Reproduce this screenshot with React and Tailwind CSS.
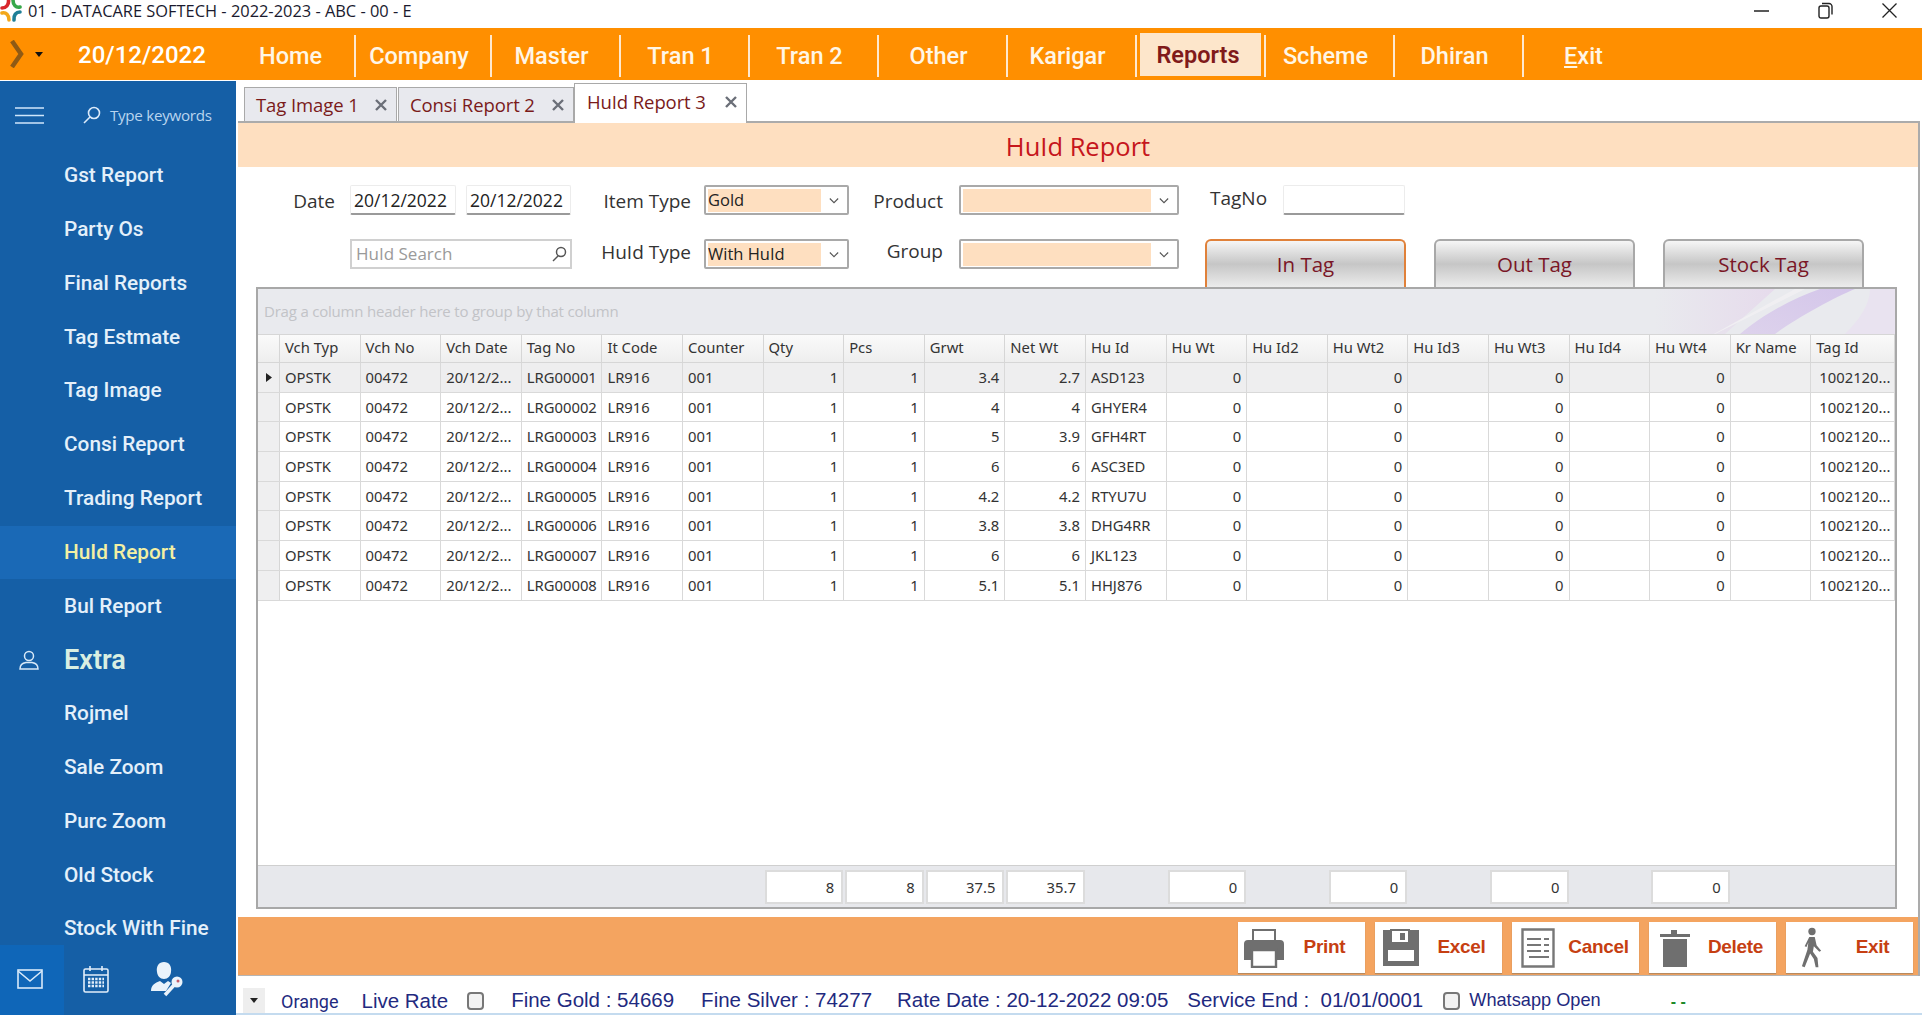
import React from "react";

const menu = ["Home","Company","Master","Tran 1","Tran 2","Other","Karigar","Reports","Scheme","Dhiran"];
const side = ["Gst Report","Party Os","Final Reports","Tag Estmate","Tag Image","Consi Report","Trading Report","HuId Report","Bul Report"];
const side2 = ["Rojmel","Sale Zoom","Purc Zoom","Old Stock","Stock With Fine"];
const cols = ["Vch Typ","Vch No","Vch Date","Tag No","It Code","Counter","Qty","Pcs","Grwt","Net Wt","Hu Id","Hu Wt","Hu Id2","Hu Wt2","Hu Id3","Hu Wt3","Hu Id4","Hu Wt4","Kr Name","Tag Id"];
const numeric = new Set([6,7,8,9,11,13,15,17]);
const data = [
  ["LRG00001","3.4","2.7","ASD123"],
  ["LRG00002","4","4","GHYER4"],
  ["LRG00003","5","3.9","GFH4RT"],
  ["LRG00004","6","6","ASC3ED"],
  ["LRG00005","4.2","4.2","RTYU7U"],
  ["LRG00006","3.8","3.8","DHG4RR"],
  ["LRG00007","6","6","JKL123"],
  ["LRG00008","5.1","5.1","HHJ876"],
];
const rows = data.map(([tag,g,n,h]) => ["OPSTK","00472","20/12/2...",tag,"LR916","001","1","1",g,n,h,"0","","0","","0","","0","","1002120..."]);
const totals = {6:"8",7:"8",8:"37.5",9:"35.7",11:"0",13:"0",15:"0",17:"0"};
const gridCols = "grid grid-cols-[22px_repeat(19,80.6px)_minmax(0,1fr)]";

const Chevron = () => (
  <svg viewBox="0 0 16 12" className="w-[14px] h-[10px] text-[#555]" fill="none" stroke="currentColor" strokeWidth="1.3"><path d="M3 3l5 5 5-5"/></svg>
);

function Combo({ value, inner }) {
  return (
    <div className={`flex items-center h-[30px] rounded-[2px] border-2 border-[#a9a9a9] bg-white pl-[2px] ${inner === "w" ? "w-[220px]" : "w-[145px]"}`}>
      <div className={`h-[23px] bg-[#fedfc0] text-[16.5px] leading-[21px] text-[#222] ${inner === "w" ? "w-[188px]" : "w-[113px]"}`}>{value}</div>
      <div className="flex-1 flex justify-center pt-[2px]"><Chevron /></div>
    </div>
  );
}

function Label({ w, children, className = "" }) {
  return <div className={`text-[19px] leading-[30px] text-right text-[#333] ${w} ${className}`}>{children}</div>;
}

function TagButton({ children, active, ml }) {
  return (
    <div className={`w-[201px] ${ml} h-[48px] rounded-t-[6px] border-2 border-b-0 ${active ? "border-[#e0813a]" : "border-[#a8a8a8]"} bg-gradient-to-b from-[#f6f6f6] via-[#c6c6c6] to-[#ececec] flex items-center justify-center text-[20.5px] text-[#7a1626] pt-[1px]`}>
      {children}
    </div>
  );
}

function Logo() {
  return (
    <svg viewBox="0 0 22 24" className="w-[22px] h-[24px] -mt-[1px]" fill="none" strokeWidth="3.6" strokeLinecap="round">
      <path d="M2 9C6 9 9 6 8.5 1" stroke="#d8262c" />
      <path d="M13 1C13 6 16 9 20 8" stroke="#37a84a" />
      <path d="M20 13C16 13 13.5 16 14 21" stroke="#1f7f96" />
      <path d="M9 21C9 16 6 13 2 14" stroke="#f2a71b" />
    </svg>
  );
}

const PrintIcon = () => (
  <svg viewBox="0 0 42 40" className="w-[42px] h-[40px]">
    <path d="M10 14V2h22v12" fill="none" stroke="#6f6f6f" strokeWidth="2"/>
    <path d="M5 12h32a4 4 0 0 1 4 4v16h-8v-8H9v8H1V16a4 4 0 0 1 4-4z" fill="#6f6f6f"/>
    <path d="M9 22h24v17H9z" fill="#fff" stroke="#6f6f6f" strokeWidth="2.4"/>
  </svg>
);
const SaveIcon = () => (
  <svg viewBox="0 0 36 38" className="w-[36px] h-[38px]">
    <path d="M0 1h7v13h20V1h9v36H0z" fill="#6f6f6f"/>
    <path d="M8 1h18v13H8z" fill="none" stroke="#6f6f6f" strokeWidth="2"/>
    <path d="M17 4h5v7h-5z" fill="#6f6f6f"/>
    <path d="M5 21h26v11H5z" fill="#fff"/>
  </svg>
);
const DocIcon = () => (
  <svg viewBox="0 0 34 40" className="w-[34px] h-[40px]" fill="none" stroke="#777" >
    <path d="M1.5 1.5h31v37h-31z" strokeWidth="2.4"/>
    <path d="M6 11h14M23 11h5M6 17h14M23 17h5M6 23h14M23 23h5M8 29h20" strokeWidth="2.2"/>
  </svg>
);
const TrashIcon = () => (
  <svg viewBox="0 0 30 38" className="w-[30px] h-[38px]">
    <path d="M0 5h11V1h6v4h13v3H0z" fill="#6f6f6f"/>
    <path d="M3 10h24v28H3z" fill="#6f6f6f"/>
  </svg>
);
const WalkIcon = () => (
  <svg viewBox="0 0 24 44" className="w-[22px] h-[42px]">
    <circle cx="12" cy="4" r="4" fill="#6f6f6f"/>
    <path d="M9 10h6l2 9 5 6-2 1-6-6-1 6 5 7 1 10h-3l-2-9-4-6-6 15-3-1 6-18 1-8-2 5-2-1z" fill="#6f6f6f"/>
  </svg>
);

function ActionBtn({ icon, label }) {
  return (
    <div className="w-[127px] h-[51px] bg-white flex items-center pr-[6px] shadow-[0_1px_1px_#b98a5e]">
      <div className="w-[52px] flex justify-center">{icon}</div>
      <div className="flex-1 text-center text-[19px] font-bold text-[#c63f12] font-['Liberation_Sans',sans-serif] tracking-[-0.3px]">{label}</div>
    </div>
  );
}

export default function App() {
  return (
    <div className="w-[1922px] h-[1015px] overflow-hidden bg-white flex flex-col font-['Open_Sans',sans-serif] text-[#222]">
      {/* title bar */}
      <div className="h-[28px] flex items-start shrink-0">
        <Logo />
        <div className="ml-[6px] text-[16.4px] text-[#1a1a2e] leading-[22px]">01 - DATACARE SOFTECH - 2022-2023 - ABC - 00 - E</div>
        <div className="ml-auto flex items-center pt-[2px] pr-[25px] gap-[49px]">
          <svg viewBox="0 0 15 15" className="w-[15px] h-[15px]"><path d="M0 8h15" stroke="#222" strokeWidth="1.5"/></svg>
          <svg viewBox="0 0 15 17" className="w-[15px] h-[17px]" fill="none" stroke="#222" strokeWidth="1.4"><rect x="1" y="4" width="10" height="12" rx="2"/><path d="M4 1.5h7a3 3 0 0 1 3 3v8"/></svg>
          <svg viewBox="0 0 15 15" className="w-[15px] h-[15px]" fill="none" stroke="#222" strokeWidth="1.3"><path d="M0.5 0.5l14 14M14.5 0.5l-14 14"/></svg>
        </div>
      </div>

      {/* orange menu */}
      <div className="h-[52px] shrink-0 bg-[#ff8f00] flex items-center font-['Roboto',sans-serif]">
        <svg viewBox="0 0 14 28" className="ml-[10px] w-[14px] h-[28px]"><path d="M2 1l9 13-9 13" fill="none" stroke="#8f5a14" strokeWidth="4.5"/></svg>
        <svg viewBox="0 0 8 5" className="ml-[11px] w-[8px] h-[5px]"><path d="M0 0h8L4 5z" fill="#111"/></svg>
        <div className="w-[149px] ml-[35px] pt-[2px] text-white text-[24px] font-medium leading-none whitespace-nowrap">20/12/2022</div>
        <div className="flex h-full items-center">
          {menu.map((m, i) => {
            const active = m === "Reports";
            return (
              <div key={m} className={`${i === 1 ? "w-[136px]" : "w-[129px]"} h-[42px] mt-[3px] flex items-center justify-center border-r-2 border-[#ffe9cf] text-[23.5px] font-medium ${active ? "pl-[2px] pr-[3px]" : i === 0 ? "" : "pr-[8px]"}`}>
                {active ? (
                  <div className="w-[121px] h-[43px] -mt-[3px] pr-[4px] pt-[4px] bg-[#fde6cb] text-[#801a1a] flex items-center justify-center font-semibold">{m}</div>
                ) : (
                  <span className="text-[#fff6e6] pt-[2px]">{m}</span>
                )}
              </div>
            );
          })}
          <div className="w-[129px] pr-[10px] pt-[5px] flex justify-center text-[23.5px] font-medium text-[#fff6e6]"><span><span className="underline">E</span>xit</span></div>
        </div>
      </div>

      <div className="flex-1 flex min-h-0 pt-[1px]">
        {/* sidebar */}
        <aside className="w-[236px] shrink-0 bg-[#155fa6] flex flex-col font-['Roboto',sans-serif]">
          <div className="h-[68px] shrink-0 flex items-center pl-[15px]">
            <svg viewBox="0 0 29 17" className="w-[29px] h-[17px]" stroke="#cfe6fb" strokeWidth="1.6"><path d="M0 1h29M0 8.5h29M0 16h29"/></svg>
            <svg viewBox="0 0 18 18" className="ml-[39px] w-[18px] h-[18px]" fill="none" stroke="#dbeafa" strokeWidth="1.6"><circle cx="11" cy="7" r="5.5"/><path d="M7 11l-6 6"/></svg>
            <div className="ml-[9px] text-[15.2px] text-[#b9d5ef] font-['Open_Sans',sans-serif] tracking-[-0.3px]">Type keywords</div>
          </div>
          <div className="flex-1 min-h-0">
            {side.map((s) => (
              <div key={s} className={`h-[53.8px] flex items-center pl-[64px] text-[20.8px] font-medium ${s === "HuId Report" ? "bg-[#1a69b6] text-[#f3f0a3]" : "text-[#e4f0fa]"}`}>{s}</div>
            ))}
            <div className="h-[53.8px] flex items-center">
              <svg viewBox="0 0 20 20" className="ml-[19px] w-[20px] h-[20px]" fill="none" stroke="#d8e9f8" strokeWidth="1.5"><circle cx="10" cy="6" r="4.5"/><path d="M1 19c0-4 2.5-6 6-6.5h6c3.5.5 6 2.5 6 6.5z"/></svg>
              <div className="ml-[25px] text-[27px] font-semibold text-[#d9efe2]">Extra</div>
            </div>
            {side2.map((s) => (
              <div key={s} className="h-[53.8px] flex items-center pl-[64px] text-[20.8px] font-medium text-[#e4f0fa]">{s}</div>
            ))}
          </div>
          <div className="h-[70px] shrink-0 flex bg-[#155fa6]">
            <div className="w-[64px] bg-[#0f66b8] flex items-center justify-center pr-[4px]">
              <svg viewBox="0 0 26 20" className="w-[26px] h-[20px] -mt-[2px]" fill="none" stroke="#d7e9f9" strokeWidth="1.6"><rect x="1" y="1" width="24" height="18"/><path d="M1 2l12 10L25 2"/></svg>
            </div>
            <div className="w-[64px] flex items-center justify-center">
              <svg viewBox="0 0 28 28" className="w-[28px] h-[28px] -mt-[2px]" fill="none" stroke="#e2eefa" strokeWidth="1.6">
                <rect x="2" y="4" width="24" height="23" rx="1.5"/>
                <path d="M2 10h24M8 1v5M20 1v5"/>
                <path d="M6 14h16M6 17.5h16M6 21h16" strokeWidth="2.4" strokeDasharray="2.4 1.2"/>
              </svg>
            </div>
            <div className="flex items-center">
              <svg viewBox="0 0 34 36" className="ml-[22px] w-[34px] h-[36px] -mt-[2px]">
                <path d="M14 1c5 0 8 4 7 10-.5 4-3 7-7 7s-6.5-3-7-7C6 5 9 1 14 1z" fill="#eaf3fb"/>
                <path d="M1 30c0-6 4-8 9-10l4 3 4-3 3 2-5 8H1z" fill="#eaf3fb"/>
                <path d="M15 34l10-11" stroke="#eaf3fb" strokeWidth="3.5" fill="none"/>
                <circle cx="27" cy="21" r="5.5" fill="#eaf3fb"/>
                <circle cx="28" cy="20" r="1.5" fill="#c65a6a"/>
              </svg>
            </div>
          </div>
        </aside>

        {/* content */}
        <main className="flex-1 min-w-0 flex flex-col pl-[2px] pr-[2px]">
          {/* tabs */}
          <div className="h-[40px] shrink-0 flex items-end pl-[6px] relative z-10">
            <div className="w-[153px] h-[34px] bg-[#e8e9ee] border border-b-0 border-[#a9a9a9] flex items-center pl-[11px] text-[18.5px] text-[#7a1a1a]">
              <span className="flex-1 tracking-[-0.1px]">Tag Image 1</span><X />
            </div>
            <div className="ml-[1px] w-[176px] h-[34px] bg-[#e8e9ee] border border-b-0 border-[#a9a9a9] flex items-center pl-[11px] text-[18.5px] text-[#7a1a1a]">
              <span className="flex-1 tracking-[-0.1px]">Consi Report 2</span><X />
            </div>
            <div className="w-[173px] h-[40px] -mb-[2px] bg-white border border-b-0 border-[#a9a9a9] flex items-center pl-[12px] text-[18.5px] text-[#7a1a1a] pb-[3px]">
              <span className="flex-1 tracking-[-0.1px]">HuId Report 3</span><X />
            </div>
          </div>

          <div className="flex-1 min-h-0 flex flex-col border-t-2 border-r-2 border-[#ababab]">
            <div className="h-[44px] shrink-0 pt-[2px] bg-[#fedfc0] flex items-center justify-center text-[25.5px] text-[#c6161c]">HuId Report</div>

            {/* form */}
            <div className="h-[120px] shrink-0 pt-[18px]">
              <div className="flex h-[30px] items-center">
                <Label w="w-[97px]" className="pt-[2px]">Date</Label>
                <DateBox w="w-[106px]" ml="ml-[15px]" />
                <DateBox w="w-[105px]" ml="ml-[10px]" />
                <Label w="w-[120px]" className="pt-[2px]">Item Type</Label>
                <div className="ml-[13px]"><Combo value="Gold" /></div>
                <Label w="w-[94px]" className="pt-[2px]">Product</Label>
                <div className="ml-[16px]"><Combo inner="w" /></div>
                <div className="ml-[31px] w-[57px] text-[19px] leading-[24px] -mt-[4px] text-[#333]">TagNo</div>
                <div className="ml-[16px] w-[122px] h-[30px] bg-white rounded-[2px] border border-[#ececec] border-b-2 border-b-[#9a9a9a]"></div>
              </div>
              <div className="flex items-start mt-[24px]">
                <div className="ml-[112px] w-[222px] h-[30px] border-2 border-[#d0d0d0] flex items-center pl-[4px] pr-[3px] text-[17px] text-[#9a9a9a]">
                  <span className="flex-1">HuId Search</span>
                  <svg viewBox="0 0 16 16" className="w-[16px] h-[16px]" fill="none" stroke="#555" strokeWidth="1.5"><circle cx="10" cy="6" r="4.5"/><path d="M7 10l-5 5"/></svg>
                </div>
                <Label w="w-[119px]" className="-mt-[2px]">HuId Type</Label>
                <div className="ml-[13px]"><Combo value="With HuId" /></div>
                <Label w="w-[94px]" className="-mt-[3px]">Group</Label>
                <div className="ml-[16px]"><Combo inner="w" /></div>
                <TagButton active ml="ml-[26px]">In Tag</TagButton>
                <TagButton ml="ml-[28px]">Out Tag</TagButton>
                <TagButton ml="ml-[28px]">Stock Tag</TagButton>
              </div>
            </div>

            {/* grid */}
            <div className="ml-[18px] w-[1641px] h-[622px] shrink-0 border-2 border-[#a8a8a8] flex flex-col font-['Noto_Sans',sans-serif] text-[14.8px] text-[#333]">
              <div className="h-[45px] shrink-0 bg-[#e9eaee] flex items-center pl-[6px] text-[15px] text-[#c2c3c7] relative overflow-hidden font-['Open_Sans',sans-serif] tracking-[-0.2px]">
                Drag a column header here to group by that column
                <svg viewBox="0 0 240 45" className="absolute right-0 top-0 w-[240px] h-[45px]" preserveAspectRatio="none">
                  <defs>
                    <linearGradient id="sw1" x1="0" x2="1" y1="0" y2="0"><stop offset="0" stopColor="#e9eaee"/><stop offset="1" stopColor="#e6dbec"/></linearGradient>
                    <linearGradient id="sw2" x1="0" x2="1" y1="1" y2="0"><stop offset="0" stopColor="#ddd2ec"/><stop offset="1" stopColor="#d4c6ea"/></linearGradient>
                  </defs>
                  <path d="M0 0h120L70 45H0z" fill="url(#sw1)"/>
                  <path d="M140 0h10L60 45h-1z" fill="#f0eff2"/>
                  <path d="M165 0h35c-20 8-60 30-80 45H85C105 28 135 10 165 0z" fill="url(#sw2)"/>
                  <path d="M215 0h25v45h-50c15-15 25-30 25-45z" fill="#e9e3f0"/>
                </svg>
              </div>
              <div className={`${gridCols} h-[29px] shrink-0 bg-gradient-to-b from-[#fafafa] to-[#eeeeee] border-y border-[#d6d6d6]`}>
                <div className="border-r border-[#d6d6d6]"></div>
                {cols.map((c) => <div key={c} className="border-r border-[#d6d6d6] pl-[5px] leading-[25px] whitespace-nowrap overflow-hidden">{c}</div>)}
              </div>
              {rows.map((r, ri) => (
                <div key={ri} className={`${gridCols} h-[29.7px] shrink-0 border-b border-[#d9d9d9] ${ri === 0 ? "bg-[#eeeeef]" : "bg-white"}`}>
                  <div className="bg-[#efeff0] border-r border-[#d6d6d6] flex items-center justify-center">
                    {ri === 0 && <svg viewBox="0 0 6 9" className="w-[6px] h-[9px]"><path d="M0 0l6 4.5L0 9z" fill="#222"/></svg>}
                  </div>
                  {r.map((v, ci) => (
                    <div key={ci} className={`border-r border-[#d9d9d9] leading-[28px] whitespace-nowrap overflow-hidden ${numeric.has(ci) ? "text-right pr-[5px]" : ci === 19 ? "pl-[8px]" : "pl-[5px]"}`}>{v}</div>
                  ))}
                </div>
              ))}
              <div className="flex-1 bg-white"></div>
              <div className={`${gridCols} h-[42px] shrink-0 bg-[#e7e8ec] border-t border-[#cfcfcf] items-center`}>
                <div></div>
                {cols.map((c, i) => (
                  <div key={c} className="px-[1px]">
                    {totals[i] && <div className="h-[34px] bg-white border-2 border-[#dcdcdc] text-right pr-[7px] leading-[30px]">{totals[i]}</div>}
                  </div>
                ))}
              </div>
            </div>

            {/* actions */}
            <div className="mt-[8px] h-[59px] shrink-0 bg-[#f4a460] flex items-start justify-end gap-[10px] pt-[5px] pr-[5px] border-b border-[#b5b5b5]">
              <ActionBtn icon={<PrintIcon />} label="Print" />
              <ActionBtn icon={<SaveIcon />} label="Excel" />
              <ActionBtn icon={<DocIcon />} label="Cancel" />
              <ActionBtn icon={<TrashIcon />} label="Delete" />
              <ActionBtn icon={<WalkIcon />} label="Exit" />
            </div>
          </div>

          {/* status */}
          <div className="h-[39px] shrink-0 flex items-center pt-[12px] pl-[5px] font-['Liberation_Sans',sans-serif] text-[#1f2a80] text-[20.5px] leading-none border-b-2 border-[#c4dbef] -mr-[2px] -ml-[2px]">
            <div className="w-[22px] h-[25px] ml-[2px] self-end bg-[#eeeeee] flex items-center justify-center">
              <svg viewBox="0 0 8 5" className="w-[8px] h-[5px]"><path d="M0 0h8L4 5z" fill="#222"/></svg>
            </div>
            <div className="ml-[16px] mt-[3px] text-[18px] font-['Roboto',sans-serif]">Orange</div>
            <div className="ml-[23px] mt-[1px]">Live Rate</div>
            <Check ml="ml-[19px]" />
            <div className="ml-[27px] whitespace-nowrap">Fine Gold : 54669</div>
            <div className="ml-[27px] whitespace-nowrap">Fine Silver : 74277</div>
            <div className="ml-[25px] whitespace-nowrap">Rate Date : 20-12-2022 09:05</div>
            <div className="ml-[19px] whitespace-nowrap">Service End :&nbsp; 01/01/0001</div>
            <Check ml="ml-[20px]" />
            <div className="ml-[9px] text-[18.2px] whitespace-nowrap">Whatsapp Open</div>
            <div className="ml-[70px] mt-[3px] text-[#1f8a2a] font-bold text-[16px]">- -</div>
          </div>
        </main>
      </div>
    </div>
  );
}

function X() {
  return (
    <svg viewBox="0 0 12 12" className="w-[12px] h-[12px] mr-[9px]" stroke="#6b6f78" strokeWidth="2.4"><path d="M1 1l10 10M11 1L1 11"/></svg>
  );
}

function DateBox({ w, ml }) {
  return (
    <div className={`${w} ${ml} h-[30px] bg-white rounded-[2px] border border-[#ececec] border-b-2 border-b-[#9a9a9a] pl-[3px] text-[17.5px] leading-[28px] text-[#222]`}>20/12/2022</div>
  );
}

function Check({ ml }) {
  return <div className={`${ml} w-[17px] h-[18px] rounded-[4px] border-2 border-[#777] bg-[#f2f2f2] shrink-0`}></div>;
}
